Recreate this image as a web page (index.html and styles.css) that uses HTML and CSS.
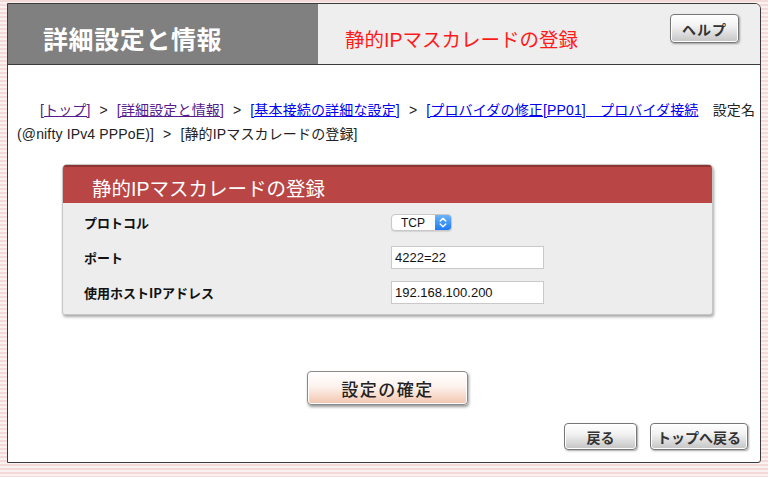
FILE: index.html
```html
<!DOCTYPE html>
<html lang="ja">
<head>
<meta charset="utf-8">
<title>静的IPマスカレードの登録</title>
<link rel="stylesheet" href="styles.css">
</head>
<body>
<div class="frame">
  <div class="header">
    <div class="header-main">詳細設定と情報</div>
    <div class="header-sub">
      <span class="page-title">静的IPマスカレードの登録</span>
      <button class="btn btn-help" type="button">ヘルプ</button>
    </div>
  </div>

  <div class="content">
    <p class="crumbs"><a class="visited" href="#">[トップ]</a><span class="sep">&gt;</span><a class="visited" href="#">[詳細設定と情報]</a><span class="sep">&gt;</span><a href="#">[基本接続の詳細な設定]</a><span class="sep">&gt;</span><a href="#">[プロバイダの修正[PP01]　プロバイダ接続</a>　設定名<br>(@nifty IPv4 PPPoE)]<span class="sep">&gt;</span>[静的IPマスカレードの登録]</p>

    <div class="panel">
      <div class="panel-head">静的IPマスカレードの登録</div>
      <div class="panel-body">
        <div class="row">
          <div class="label">プロトコル</div>
          <div class="value">
            <div class="select">
              <span class="select-text">TCP</span>
              <span class="select-arrow">
                <svg width="10" height="13" viewBox="0 0 10 13"><path d="M2.2 5 L5 2.2 L7.8 5 M2.2 8 L5 10.8 L7.8 8" fill="none" stroke="#fff" stroke-width="1.4" stroke-linecap="round" stroke-linejoin="round"/></svg>
              </span>
            </div>
          </div>
        </div>
        <div class="row">
          <div class="label">ポート</div>
          <div class="value"><div class="input">4222=22</div></div>
        </div>
        <div class="row">
          <div class="label">使用ホストIPアドレス</div>
          <div class="value"><div class="input">192.168.100.200</div></div>
        </div>
      </div>
    </div>

    <div class="submit-wrap">
      <button class="btn-submit" type="button">設定の確定</button>
    </div>

    <div class="nav-buttons">
      <button class="btn btn-back" type="button">戻る</button>
      <button class="btn btn-top" type="button">トップへ戻る</button>
    </div>
  </div>
</div>
</body>
</html>
```

FILE: styles.css
```css
html, body {
  margin: 0;
  padding: 0;
}

body {
  width: 768px;
  height: 477px;
  overflow: hidden;
  font-family: "Liberation Sans", "Noto Sans CJK JP", sans-serif;
  color: #222;
  background: repeating-linear-gradient(
    to bottom,
    #f4d9d9 0px,
    #f4d9d9 2px,
    #fbf1f1 2px,
    #fbf1f1 4px
  );
  padding-top: 3px;
  box-sizing: border-box;
}

.frame {
  margin-left: 7px;
  width: 754px;
  height: 460px;
  box-sizing: border-box;
  border: 1px solid #3a3a3a;
  border-radius: 0 6px 3px 0;
  background: #fff;
  display: flex;
  flex-direction: column;
}

.header {
  display: flex;
  height: 60px;
  border-bottom: 1px solid #3c3c3c;
  border-radius: 0 5px 0 0;
  overflow: hidden;
  flex-shrink: 0;
}

.header-main {
  width: 310px;
  background: #808080;
  color: #fff;
  font-family: "Noto Sans CJK JP", sans-serif;
  font-weight: 700;
  font-size: 25px;
  letter-spacing: 0.6px;
  padding-left: 35px;
  box-sizing: border-box;
  display: flex;
  align-items: center;
  padding-top: 7px;
}

.header-sub {
  flex: 1;
  background: #eeeeee;
  display: flex;
  align-items: center;
  justify-content: space-between;
  padding-left: 27px;
  padding-right: 21px;
}

.page-title {
  color: #ff1a1a;
  font-size: 19.5px;
  padding-top: 8px;
}

.btn {
  font-family: "Noto Sans CJK JP", sans-serif;
  font-weight: 700;
  color: #333;
  border: 1px solid #777;
  border-radius: 4px;
  background: linear-gradient(to bottom, #ffffff 0%, #f2f2f2 40%, #c4c4c4 100%);
  box-shadow: inset 0 0 0 1px #fff, 1px 1px 2px rgba(0, 0, 0, 0.35);
  padding: 0;
  cursor: pointer;
}

.btn-help {
  width: 69px;
  height: 29px;
  font-size: 14px;
  letter-spacing: 1px;
  margin-top: -11px;
}

.content {
  flex: 1;
  display: flex;
  flex-direction: column;
  padding: 0 2px 0 9px;
}

.crumbs {
  margin: 33px 0 0;
  font-size: 14px;
  line-height: 24px;
  text-indent: 23px;
  color: #222;
  white-space: nowrap;
  letter-spacing: 0.15px;
}

.crumbs a {
  color: #0000ee;
  text-decoration: underline;
}

.crumbs a.visited {
  color: #551a8b;
}

.sep {
  display: inline-block;
  text-indent: 0;
  padding: 0 9px;
}

.panel {
  margin: 18px 0 0 45px;
  width: 649px;
  border: 1px solid #c6c6c6;
  border-radius: 5px 5px 3px 3px;
  box-shadow: 1px 2px 3px rgba(0, 0, 0, 0.35);
  background: #ededed;
  overflow: hidden;
}

.panel-head {
  background: #b94545;
  border-top: 2px solid #8f3434;
  height: 38px;
  box-sizing: border-box;
  color: #fff;
  font-size: 19.5px;
  padding-left: 29px;
  display: flex;
  align-items: center;
  padding-top: 5px;
}

.panel-body {
  padding: 2px 0 4px;
}

.row {
  display: flex;
  align-items: center;
  height: 35px;
}

.label {
  width: 307px;
  padding-left: 21px;
  font-family: "Noto Sans CJK JP", sans-serif;
  font-weight: 700;
  font-size: 13px;
  color: #111;
}

.value {
  flex: 1;
  display: flex;
  align-items: center;
}

.select {
  width: 61px;
  height: 17px;
  box-sizing: border-box;
  border: 1px solid #c8c8c8;
  border-radius: 4px;
  background: #fff;
  display: flex;
  align-items: center;
  justify-content: space-between;
  overflow: hidden;
  box-shadow: 0 1px 1px rgba(0, 0, 0, 0.1);
}

.select-text {
  font-size: 12px;
  padding-left: 9px;
  color: #111;
}

.select-arrow {
  width: 16px;
  height: 100%;
  background: linear-gradient(to bottom, #6cb3fa, #1e7cf1);
  display: flex;
  align-items: center;
  justify-content: center;
}

.input {
  width: 153px;
  height: 23px;
  box-sizing: border-box;
  border: 1px solid #c9c9c9;
  background: #fff;
  font-size: 13px;
  line-height: 21px;
  padding-left: 3px;
  color: #111;
}

.submit-wrap {
  display: flex;
  justify-content: center;
  margin-top: 56px;
  padding-left: 0;
}

.btn-submit {
  width: 161px;
  height: 34px;
  font-family: "Noto Sans CJK JP", sans-serif;
  font-size: 17px;
  font-weight: 500;
  letter-spacing: 1.5px;
  color: #222;
  border: 1px solid #8a8a8a;
  border-radius: 4px;
  background: linear-gradient(to bottom, #ffffff 0%, #fdf3ee 45%, #f2c4ad 100%);
  box-shadow: inset 0 0 0 1px #fff, 1px 2px 3px rgba(0, 0, 0, 0.4);
  padding: 0;
  cursor: pointer;
}

.nav-buttons {
  display: flex;
  justify-content: flex-end;
  gap: 13px;
  margin-top: 18px;
  padding-right: 10px;
}

.btn-back {
  width: 73px;
  height: 27px;
  font-size: 14px;
}

.btn-top {
  width: 98px;
  height: 27px;
  font-size: 14px;
}
```
